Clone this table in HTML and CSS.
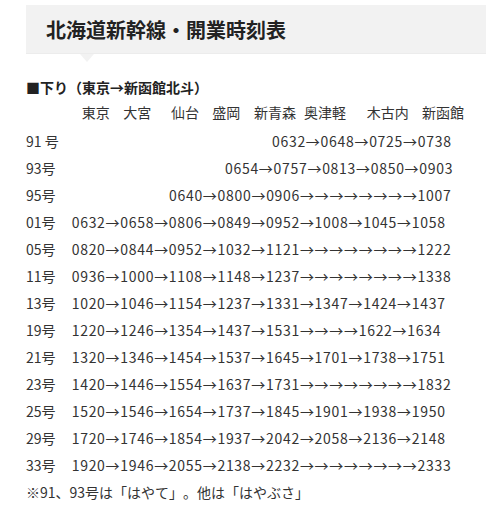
FILE: index.html
```html
<!DOCTYPE html>
<html lang="ja">
<head>
<meta charset="utf-8">
<title>北海道新幹線・開業時刻表</title>
<link rel="stylesheet" href="styles.css">
</head>
<body>
<div class="page">
  <h2 class="heading">北海道新幹線・開業時刻表</h2>
  <p class="direction">■下り（東京→新函館北斗）</p>
  <div class="stations">
    <span>東京</span><span>大宮</span><span>仙台</span><span>盛岡</span><span>新青森</span><span>奥津軽</span><span>木古内</span><span>新函館</span>
  </div>
  <div class="timetable">
    <div class="row"><span class="no">91 号</span><span class="times off-91">0632→0648→0725→0738</span></div>
    <div class="row"><span class="no">93号</span><span class="times off-93">0654→0757→0813→0850→0903</span></div>
    <div class="row"><span class="no">95号</span><span class="times off-95">0640→0800→0906→→→→→→→→1007</span></div>
    <div class="row"><span class="no">01号</span><span class="times">0632→0658→0806→0849→0952→1008→1045→1058</span></div>
    <div class="row"><span class="no">05号</span><span class="times">0820→0844→0952→1032→1121→→→→→→→→1222</span></div>
    <div class="row"><span class="no">11号</span><span class="times">0936→1000→1108→1148→1237→→→→→→→→1338</span></div>
    <div class="row"><span class="no">13号</span><span class="times">1020→1046→1154→1237→1331→1347→1424→1437</span></div>
    <div class="row"><span class="no">19号</span><span class="times">1220→1246→1354→1437→1531→→→→1622→1634</span></div>
    <div class="row"><span class="no">21号</span><span class="times">1320→1346→1454→1537→1645→1701→1738→1751</span></div>
    <div class="row"><span class="no">23号</span><span class="times">1420→1446→1554→1637→1731→→→→→→→→1832</span></div>
    <div class="row"><span class="no">25号</span><span class="times">1520→1546→1654→1737→1845→1901→1938→1950</span></div>
    <div class="row"><span class="no">29号</span><span class="times">1720→1746→1854→1937→2042→2058→2136→2148</span></div>
    <div class="row"><span class="no">33号</span><span class="times">1920→1946→2055→2138→2232→→→→→→→→2333</span></div>
  </div>
  <p class="note">※91、93号は「はやて」。他は「はやぶさ」</p>
</div>
</body>
</html>
```

FILE: styles.css
```css
html, body {
  margin: 0;
  padding: 0;
  background: #ffffff;
}

body {
  font-family: "Noto Sans CJK JP", "Noto Sans", sans-serif;
  color: #333333;
  font-size: 14px;
  text-spacing-trim: space-all;
}

.page {
  padding: 5px 0 0 26px;
}

.heading {
  position: relative;
  margin: 0;
  height: 49px;
  padding-left: 20px;
  display: flex;
  align-items: center;
  background: #f2f2f2;
  border-bottom: 1px solid #ececec;
  box-sizing: border-box;
  font-size: 20px;
  font-weight: bold;
  color: #222222;
}

.heading::after {
  content: "";
  position: absolute;
  left: 54px;
  top: 100%;
  margin-top: 1px;
  border-left: 7px solid transparent;
  border-right: 7px solid transparent;
  border-top: 8px solid #f2f2f2;
}

.direction {
  margin: 21px 0 0 0;
  line-height: 25px;
  font-weight: bold;
  color: #222222;
}

.stations {
  display: grid;
  grid-template-columns: 41.6px 47.7px 41.3px 41.7px 50px 62.7px 55.3px auto;
  padding-left: 55.7px;
  line-height: 25px;
}

.timetable {
  margin-top: 3px;
}

.row {
  display: flex;
  line-height: 27px;
  white-space: nowrap;
  letter-spacing: 0.7px;
}

.no {
  width: 45.7px;
  flex: none;
  letter-spacing: 0;
}

.off-91 { padding-left: 200.3px; }
.off-93 { padding-left: 153.3px; }
.off-95 { padding-left: 97.3px; }

.note {
  margin: 0;
  line-height: 27px;
}
```
